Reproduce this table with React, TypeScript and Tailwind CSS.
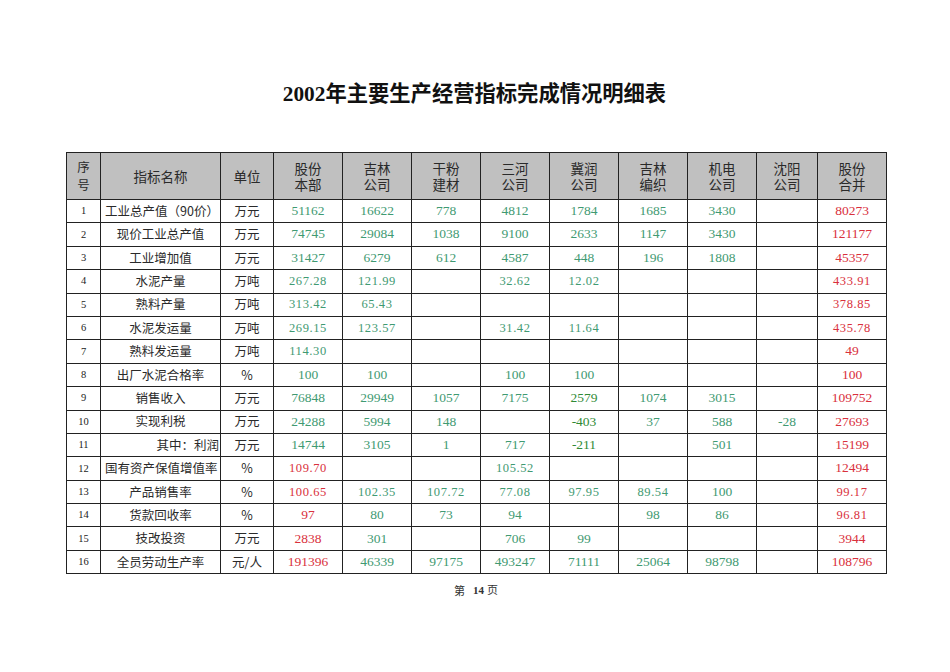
const cols = ['股份\n本部', '吉林\n公司', '干粉\n建材', '三河\n公司', '冀润\n公司', '吉林\n编织', '机电\n公司', '沈阳\n公司', '股份\n合并'];

// value markers: r: red, d: dark green, default teal
type Row = { name: string; unit: string; vals: string[]; align?: 'right' | 'fill' };

const rows: Row[] = [
  { name: '工业总产值（90价）', unit: '万元', vals: ['51162', '16622', '778', '4812', '1784', '1685', '3430', '', '80273'], align: 'fill' },
  { name: '现价工业总产值', unit: '万元', vals: ['74745', '29084', '1038', '9100', '2633', '1147', '3430', '', '121177'] },
  { name: '工业增加值', unit: '万元', vals: ['31427', '6279', '612', '4587', '448', '196', '1808', '', '45357'] },
  { name: '水泥产量', unit: '万吨', vals: ['267.28', '121.99', '', '32.62', '12.02', '', '', '', '433.91'] },
  { name: '熟料产量', unit: '万吨', vals: ['313.42', '65.43', '', '', '', '', '', '', '378.85'] },
  { name: '水泥发运量', unit: '万吨', vals: ['269.15', '123.57', '', '31.42', '11.64', '', '', '', '435.78'] },
  { name: '熟料发运量', unit: '万吨', vals: ['114.30', '', '', '', '', '', '', '', '49'] },
  { name: '出厂水泥合格率', unit: '%', vals: ['100', '100', '', '100', '100', '', '', '', '100'] },
  { name: '销售收入', unit: '万元', vals: ['76848', '29949', '1057', '7175', 'd:2579', '1074', '3015', '', '109752'] },
  { name: '实现利税', unit: '万元', vals: ['24288', '5994', '148', '', 'd:-403', '37', '588', '-28', '27693'] },
  { name: '其中：利润', unit: '万元', vals: ['14744', '3105', '1', '717', 'd:-211', '', '501', '', '15199'], align: 'right' },
  { name: '国有资产保值增值率', unit: '%', vals: ['r:109.70', '', '', '105.52', '', '', '', '', '12494'], align: 'fill' },
  { name: '产品销售率', unit: '%', vals: ['r:100.65', '102.35', '107.72', '77.08', '97.95', '89.54', '100', '', '99.17'] },
  { name: '货款回收率', unit: '%', vals: ['r:97', '80', '73', '94', '', '98', '86', '', '96.81'] },
  { name: '技改投资', unit: '万元', vals: ['r:2838', '301', '', '706', '99', '', '', '', '3944'] },
  { name: '全员劳动生产率', unit: '元/人', vals: ['r:191396', '46339', '97175', '493247', '71111', '25064', '98798', '', '108796'] },
];

const cjk = "font-['Noto_Sans_CJK_SC',sans-serif]";
const serif = "font-['Liberation_Serif','Noto_Sans_CJK_SC',serif]";

function ValueCell({ raw, last }: { raw: string; last: boolean }) {
  let color = 'text-[#3f9a72]';
  let v = raw;
  if (raw.startsWith('r:')) { color = 'text-[#d9303c]'; v = raw.slice(2); }
  else if (raw.startsWith('d:')) { color = 'text-[#2f8a35]'; v = raw.slice(2); }
  if (last) color = 'text-[#d9303c]';
  const decimal = v.includes('.');
  return (
    <div className={`flex items-center justify-center border-r border-b border-[#222] ${serif} ${color} ${decimal ? 'text-[12.5px] tracking-[0.6px]' : 'text-[13.5px]'}`}>
      {v}
    </div>
  );
}

export default function App() {
  return (
    <div className="w-[950px] h-[672px] bg-white relative overflow-hidden">
      {/* Title */}
      <div className="pt-[78px] h-[152px]">
        <h1 className="text-center text-[21.3px] leading-[28px] font-bold text-[#111] ml-[-1px]">
          <span className="font-['Liberation_Serif',serif]">2002</span>
          <span className={cjk}>年主要生产经营指标完成情况明细表</span>
        </h1>
      </div>

      {/* Table */}
      <div className="ml-[66px] w-[821px] border-l border-t border-[#222] grid grid-cols-[34px_120px_53px_69px_69px_69px_69px_69px_69px_69px_61px_69px] grid-rows-[47px_repeat(16,23.4px)]">
        {/* Header */}
        <div className={`bg-[#c0c0c0] border-r border-b border-[#222] flex flex-col items-center justify-center text-center text-[12.5px] text-[#2a2a2a] ${cjk}`}>
          <span className="leading-[18px]">序</span>
          <span className="leading-[18px]">号</span>
        </div>
        <div className={`bg-[#c0c0c0] border-r border-b border-[#222] flex items-center justify-center text-[13.5px] text-[#2a2a2a] ${cjk}`}>指标名称</div>
        <div className={`bg-[#c0c0c0] border-r border-b border-[#222] flex items-center justify-center text-[13.5px] text-[#2a2a2a] ${cjk}`}>单位</div>
        {cols.map((c) => (
          <div key={c} className={`bg-[#c0c0c0] border-r border-b border-[#222] flex items-center justify-center text-center whitespace-pre-line text-[13.5px] leading-[16px] text-[#2a2a2a] ${cjk}`}>
            {c}
          </div>
        ))}

        {/* Body */}
        {rows.map((r, i) => (
          <div key={r.name} className="contents">
            <div className={`border-r border-b border-[#222] flex items-center justify-center text-[10.5px] text-[#222] ${serif}`}>{i + 1}</div>
            <div
              className={`border-r border-b border-[#222] flex items-center text-[12.5px] text-[#2a2a2a] whitespace-nowrap ${cjk} ${
                r.align === 'right' ? 'justify-end pr-[1px]' : r.align === 'fill' ? 'justify-start pl-[4px]' : 'justify-center'
              }`}
            >
              {r.name}
            </div>
            <div className={`border-r border-b border-[#222] flex items-center justify-center text-[12.5px] text-[#2a2a2a] ${cjk}`}>{r.unit}</div>
            {r.vals.map((v, j) => (
              <ValueCell key={j} raw={v} last={j === r.vals.length - 1} />
            ))}
          </div>
        ))}
      </div>

      {/* Footer */}
      <div className="mt-[7px] flex justify-center items-center gap-[8px] text-[11px] text-[#333] pl-[2px]">
        <span className={cjk}>第</span>
        <span>
          <span className="font-['Liberation_Serif',serif] font-bold">14</span>
          <span className={`${cjk} ml-[3px]`}>页</span>
        </span>
      </div>
    </div>
  );
}
